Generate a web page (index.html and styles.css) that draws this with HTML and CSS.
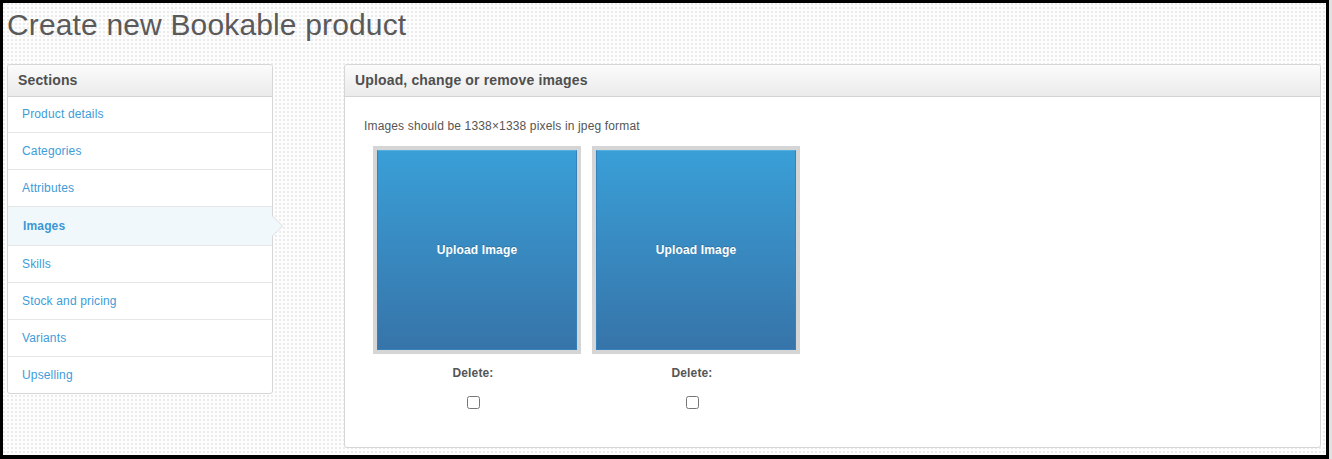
FILE: index.html
```html
<!DOCTYPE html>
<html lang="en">
<head>
<meta charset="utf-8">
<title>Create new Bookable product</title>
<link rel="stylesheet" href="styles.css">
</head>
<body>
<div class="frame">
  <h1 class="page-title">Create new Bookable product</h1>
  <div class="layout">
    <aside class="panel sections">
      <div class="panel-head">Sections</div>
      <ul class="nav">
        <li class="nav-item first"><a href="#">Product details</a></li>
        <li class="nav-item"><a href="#">Categories</a></li>
        <li class="nav-item"><a href="#">Attributes</a></li>
        <li class="nav-item active"><a href="#">Images</a></li>
        <li class="nav-item"><a href="#">Skills</a></li>
        <li class="nav-item"><a href="#">Stock and pricing</a></li>
        <li class="nav-item"><a href="#">Variants</a></li>
        <li class="nav-item last"><a href="#">Upselling</a></li>
      </ul>
    </aside>
    <section class="panel main">
      <div class="panel-head">Upload, change or remove images</div>
      <div class="panel-body">
        <p class="hint">Images should be 1338×1338 pixels in jpeg format</p>
        <div class="images">
          <div class="image-col">
            <div class="image-frame"><div class="upload">Upload Image</div></div>
            <div class="caption">
              <div class="delete-label">Delete:</div>
              <input type="checkbox" class="delete-box">
            </div>
          </div>
          <div class="image-col">
            <div class="image-frame"><div class="upload">Upload Image</div></div>
            <div class="caption">
              <div class="delete-label">Delete:</div>
              <input type="checkbox" class="delete-box">
            </div>
          </div>
        </div>
      </div>
    </section>
  </div>
</div>
</body>
</html>
```

FILE: styles.css
```css
html, body {
  margin: 0;
  padding: 0;
}
body {
  background: #e2e2e2;
  font-family: "Liberation Sans", Arial, sans-serif;
  letter-spacing: 0.15px;
  width: 1332px;
  height: 459px;
  overflow: hidden;
}
.frame {
  box-sizing: border-box;
  width: 1329px;
  height: 459px;
  border: 3px solid #000;
  border-bottom-width: 4px;
  padding: 4px 5px 0 4px;
  background-color: #fdfdfd;
  background-image: radial-gradient(circle at 1px 1px, #ebebeb 0.9px, transparent 1.1px);
  background-size: 4px 4px;
}
.page-title {
  margin: 0 0 21px 0;
  font-size: 30px;
  line-height: 36px;
  font-weight: normal;
  color: #5a5a5a;
}
.layout {
  display: flex;
  align-items: flex-start;
  gap: 71px;
}
.panel {
  box-sizing: border-box;
  background: #fff;
  border: 1px solid #d6d6d6;
  border-radius: 3px;
}
.sections {
  width: 266px;
  flex: none;
}
.main {
  flex: 1;
}
.panel-head {
  height: 31px;
  line-height: 31px;
  padding: 0 10px;
  font-size: 14px;
  font-weight: bold;
  color: #4f4f4f;
  background: linear-gradient(#fbfbfb, #ebebeb);
  border-bottom: 1px solid #d4d4d4;
  border-radius: 3px 3px 0 0;
}
.nav {
  list-style: none;
  margin: 0;
  padding: 0;
}
.nav-item {
  position: relative;
  height: 36px;
  line-height: 36px;
  border-bottom: 1px solid #e6e6e6;
  padding: 0 14px;
  font-size: 12px;
}
.nav-item.first {
  height: 35px;
  line-height: 35px;
}
.nav-item.last {
  border-bottom: none;
}
.nav-item a {
  color: #3d9cd9;
  text-decoration: none;
}
.nav-item.active {
  height: 38px;
  line-height: 38px;
  background: #f1f8fc;
  padding-left: 15px;
}
.nav-item.active a {
  font-weight: bold;
  color: #3d97d3;
}
.nav-item.active::before,
.nav-item.active::after {
  content: "";
  position: absolute;
  top: 50%;
  width: 0;
  height: 0;
  border-style: solid;
}
.nav-item.active::before {
  right: -11px;
  margin-top: -11px;
  border-width: 11px 0 11px 11px;
  border-color: transparent transparent transparent #dcdcdc;
}
.nav-item.active::after {
  right: -10px;
  margin-top: -10px;
  border-width: 10px 0 10px 10px;
  border-color: transparent transparent transparent #f1f8fc;
}
.panel-body {
  padding: 21px 18px 38px 19px;
}
.hint {
  margin: 0 0 12px 0;
  font-size: 12px;
  line-height: 16px;
  color: #555;
}
.images {
  display: flex;
  gap: 11px;
  padding-left: 9px;
}
.image-col {
  width: 208px;
}
.image-frame {
  box-sizing: border-box;
  width: 208px;
  height: 208px;
  border: 4px solid #d5d5d5;
  background: #d5d5d5;
}
.upload {
  box-sizing: border-box;
  height: 200px;
  display: flex;
  align-items: center;
  justify-content: center;
  border: 1px solid #3581bd;
  border-top-color: #55aee0;
  background: linear-gradient(#3a9fd7, #3674a9);
  color: #fff;
  font-size: 12px;
  font-weight: bold;
  text-shadow: 0 -1px 0 rgba(0, 0, 0, 0.2);
}
.caption {
  width: 200px;
  display: flex;
  flex-direction: column;
  align-items: center;
}
.delete-label {
  margin-top: 11px;
  font-size: 12px;
  line-height: 16px;
  font-weight: bold;
  color: #555;
}
.delete-box {
  display: block;
  width: 13px;
  height: 13px;
  margin: 15px 0 0 0;
}
```
